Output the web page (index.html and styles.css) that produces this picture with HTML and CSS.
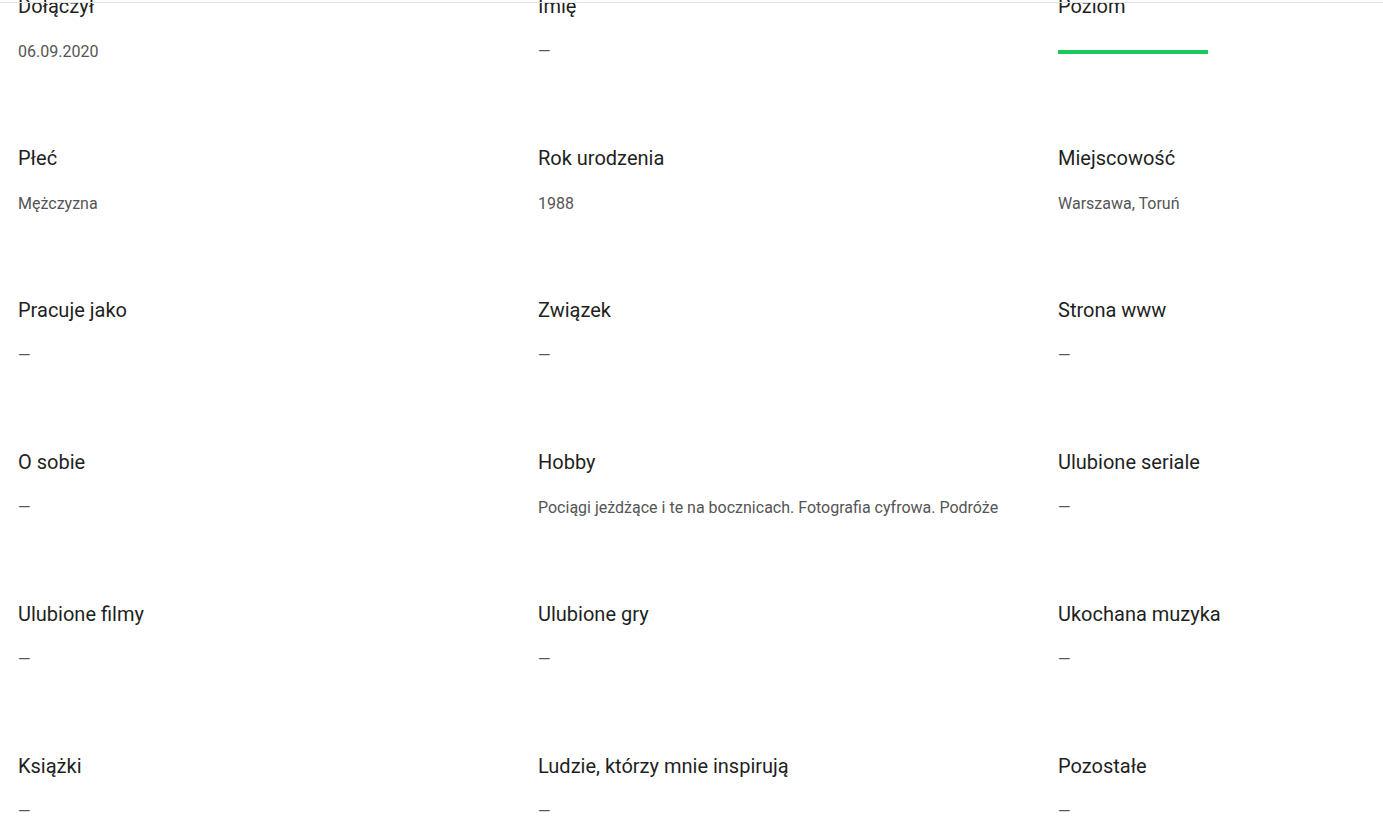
FILE: index.html
```html
<!DOCTYPE html>
<html lang="pl">
<head>
  <meta charset="UTF-8">
  <meta name="viewport" content="width=device-width, initial-scale=1.0">
  <title>Profil</title>
  <link rel="stylesheet" href="styles.css">
</head>
<body>
  <div class="topLine"></div>
  <div class="profileInfo">
    <div class="infoItem">
      <div class="infoLabel">Dołączył</div>
      <div class="infoValue">06.09.2020</div>
    </div>
    <div class="infoItem">
      <div class="infoLabel">Imię</div>
      <div class="infoValue">—</div>
    </div>
    <div class="infoItem">
      <div class="infoLabel">Poziom</div>
      <div class="infoValue levelValue">
        <div class="levelBar"></div>
      </div>
    </div>

    <div class="infoItem">
      <div class="infoLabel">Płeć</div>
      <div class="infoValue">Mężczyzna</div>
    </div>
    <div class="infoItem">
      <div class="infoLabel">Rok urodzenia</div>
      <div class="infoValue">1988</div>
    </div>
    <div class="infoItem">
      <div class="infoLabel">Miejscowość</div>
      <div class="infoValue">Warszawa, Toruń</div>
    </div>

    <div class="infoItem">
      <div class="infoLabel">Pracuje jako</div>
      <div class="infoValue">—</div>
    </div>
    <div class="infoItem">
      <div class="infoLabel">Związek</div>
      <div class="infoValue">—</div>
    </div>
    <div class="infoItem">
      <div class="infoLabel">Strona www</div>
      <div class="infoValue">—</div>
    </div>

    <div class="infoItem">
      <div class="infoLabel">O sobie</div>
      <div class="infoValue">—</div>
    </div>
    <div class="infoItem">
      <div class="infoLabel">Hobby</div>
      <div class="infoValue">Pociągi jeżdżące i te na bocznicach. Fotografia cyfrowa. Podróże</div>
    </div>
    <div class="infoItem">
      <div class="infoLabel">Ulubione seriale</div>
      <div class="infoValue">—</div>
    </div>

    <div class="infoItem">
      <div class="infoLabel">Ulubione filmy</div>
      <div class="infoValue">—</div>
    </div>
    <div class="infoItem">
      <div class="infoLabel">Ulubione gry</div>
      <div class="infoValue">—</div>
    </div>
    <div class="infoItem">
      <div class="infoLabel">Ukochana muzyka</div>
      <div class="infoValue">—</div>
    </div>

    <div class="infoItem">
      <div class="infoLabel">Książki</div>
      <div class="infoValue">—</div>
    </div>
    <div class="infoItem">
      <div class="infoLabel">Ludzie, którzy mnie inspirują</div>
      <div class="infoValue">—</div>
    </div>
    <div class="infoItem">
      <div class="infoLabel">Pozostałe</div>
      <div class="infoValue">—</div>
    </div>
  </div>
</body>
</html>
```

FILE: styles.css
```css
html, body {
  margin:0;
  padding:0;
  background:#fff;
  overflow:hidden;
}
body {
  font-family: Roboto, "Noto Sans", Arial, sans-serif;
  color:#222;
}
.topLine {
  position: fixed;
  top:2px;
  left:0;
  right:0;
  height:1px;
  background:#e4e4e4;
}
.profileInfo {
  display:grid;
  grid-template-columns: 520px 520px 1fr;
  grid-auto-rows: 152px;
  padding-left:18px;
  margin-top:-6px;
}
.infoLabel {
  font-size:20px;
  line-height:24px;
  color:#1f1f1f;
}
.infoValue {
  margin-top:22px;
  font-size:16px;
  line-height:24px;
  color:#555;
  white-space:nowrap;
}
.levelValue {
  padding-top:10px;
}
.levelBar {
  width:150px;
  height:4px;
  background:#1dc760;
}
```
